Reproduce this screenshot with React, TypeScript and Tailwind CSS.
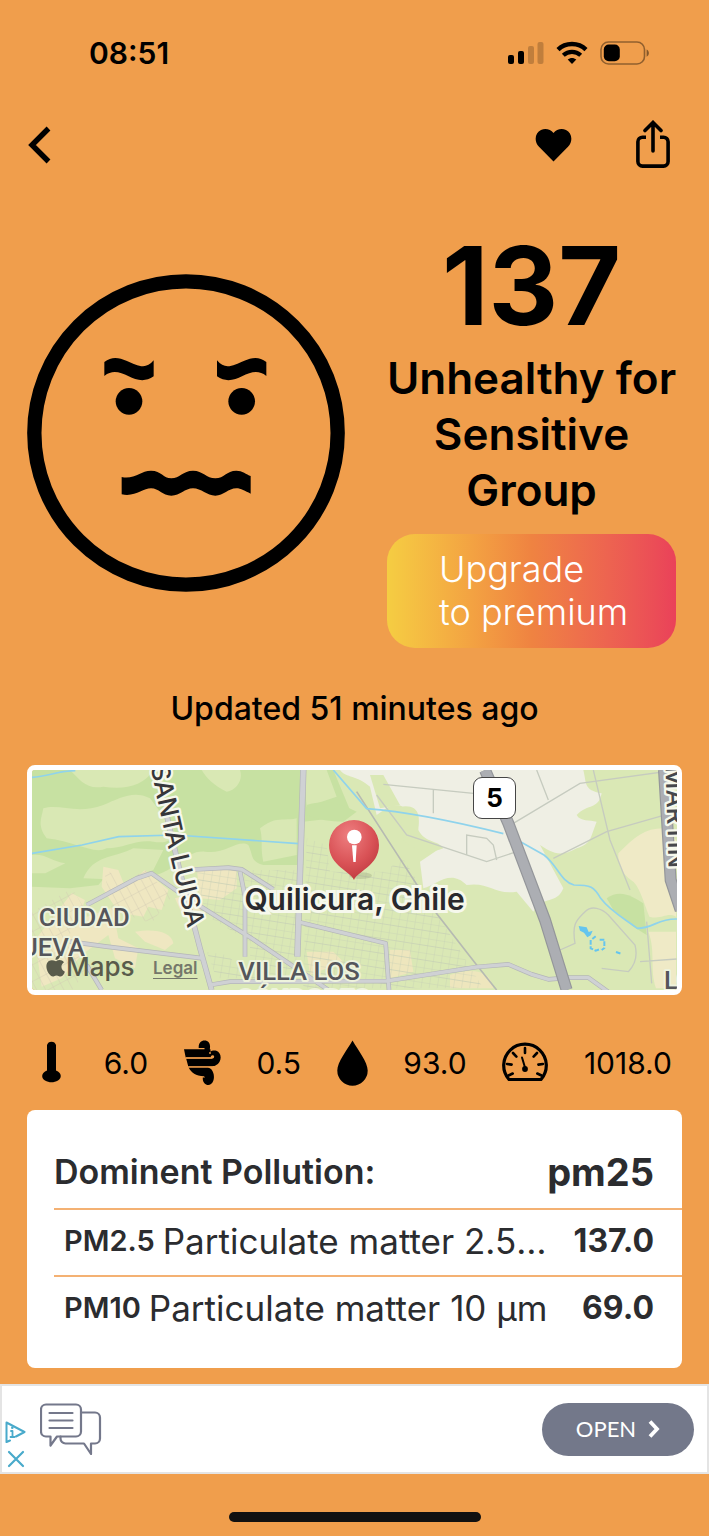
import type { ReactNode } from "react";

const BLACK = "#000";

function StatusBar() {
  return (
    <div className="flex h-[106px] items-center justify-between pr-[59px] pl-[89px]">
      <time className="text-[30px] leading-10 font-semibold">08:51</time>
      <div className="flex items-center gap-3">
        <svg width="36" height="24" viewBox="0 0 36 24" role="img" aria-label="Signal">
          <rect x="0" y="14" width="6" height="9" rx="2" />
          <rect x="10" y="10" width="6" height="13" rx="2" />
          <rect x="20" y="5" width="6" height="18" rx="2" opacity="0.2" />
          <rect x="29.500" y="1" width="6" height="22" rx="2" opacity="0.2" />
        </svg>
        <svg width="32" height="24" viewBox="0 0 32 24" fill="none" role="img" aria-label="Wi-Fi">
          <path d="M2 8.600C9.500 1.200 22.500 1.200 30 8.600" stroke={BLACK} strokeWidth="4.400" />
          <path d="M7.300 14.300c5-4.600 12.400-4.600 17.400 0" stroke={BLACK} strokeWidth="4.200" />
          <path d="M11.700 18.600c2.500-2.200 6.100-2.200 8.600 0L16 23z" fill={BLACK} />
        </svg>
        <svg width="50" height="24" viewBox="0 0 50 24" fill="none" role="img" aria-label="Battery">
          <rect x="1" y="1" width="43.500" height="22" rx="7.500" stroke={BLACK} strokeOpacity="0.4" strokeWidth="1.600" />
          <rect x="3.800" y="3.600" width="16" height="16.600" rx="5" fill={BLACK} />
          <path d="M46.600 8.500c3 1.200 3 6 0 7.200z" fill={BLACK} fillOpacity="0.45" />
        </svg>
      </div>
    </div>
  );
}

function NavBar() {
  return (
    <nav className="flex h-[78px] items-center justify-between pr-[39px] pl-7">
      <button type="button" aria-label="Back">
        <svg width="24" height="38" viewBox="0 0 24 38" fill="none">
          <path d="M20.500 2.500 4 19l16.500 16.500" stroke={BLACK} strokeWidth="5.400" />
        </svg>
      </button>
      <div className="flex items-center gap-16">
        <button type="button" aria-label="Favourite">
          <svg width="37" height="34" viewBox="0 0 37 34">
            <path d="M18.500 33.500 4 18.800C-1.500 13 .2 4.600 6 1.900c4.600-2 9.600-.6 12.500 3.200C21.400 1.300 26.400-.1 31 1.900c5.800 2.700 7.500 11.100 2 16.900z" />
          </svg>
        </button>
        <button type="button" aria-label="Share">
          <svg width="34" height="50" viewBox="0 0 34 50" fill="none" stroke={BLACK} strokeWidth="3.600">
            <path d="M10 17.200H6.500a4.600 4.600 0 0 0-4.600 4.600v19.700a4.600 4.600 0 0 0 4.600 4.600h21a4.600 4.600 0 0 0 4.600-4.600V21.800a4.600 4.600 0 0 0-4.600-4.600H24" />
            <path d="M17 31V3M9 10.500 17 2.500l8 8" strokeLinecap="round" />
          </svg>
        </button>
      </div>
    </nav>
  );
}

function Face() {
  return (
    <svg className="h-auto w-[318px] shrink-0" viewBox="22 42 954 954" role="img" aria-label="Uneasy face">
      <circle cx="499" cy="519" r="455" fill="none" stroke={BLACK} strokeWidth="43" />
      <circle cx="328" cy="424" r="40" />
      <circle cx="666" cy="424" r="40" />
      <path d="M254 306c22-18 45-13 66-4 34 15 58 29 82-1v48c-26 19-53 11-75 0-27-13-49-20-73-1z" />
      <path d="M740 306c-22-18-45-13-66-4-34 15-58 29-82-1v48c26 19 53 11 75 0 27-13 49-20 73-1z" />
      <path d="M306 651C345 659 362 632 394 632S430 655 455 655S490 632 520 632S560 655 587 655S620 632 650 632C668 632 680 643 693 648V701C676 693 664 685 650 685C626 685 612 707 587 707S545 685 520 685S482 707 455 707S418 685 394 685C370 685 346 712 306 703Z" />
    </svg>
  );
}

function Hero() {
  return (
    <section className="flex items-center gap-[42px] pr-[33px] pl-[27px]">
      <Face />
      <div className="flex min-w-0 flex-1 flex-col">
        <h1 className="-mx-3 text-center text-[44px] leading-14 font-semibold">
          <span className="block pt-1 text-[108px] leading-[128px] font-bold">137</span>
          Unhealthy for Sensitive
          <br />
          Group
        </h1>
        <button
          type="button"
          className="mt-4 rounded-[28px] bg-linear-to-r from-[#f5cd42] via-[#ef8341] to-[#ea4159] py-[14px] pl-[52px] text-left text-[36px] leading-[43px] font-light text-white"
        >
          Upgrade
          <br />
          to premium
        </button>
      </div>
    </section>
  );
}

function MapArt() {
  return (
    <svg className="block h-full w-full" viewBox="36 45 1935 660" preserveAspectRatio="xMidYMid slice" aria-hidden="true">
      <defs>
        <pattern id="blocks" width="24" height="44" patternUnits="userSpaceOnUse" patternTransform="rotate(9)">
          <path d="M0 0H24M0 22H24M0 0V44" fill="none" stroke="#c5ceb4" strokeWidth="2" />
        </pattern>
        <pattern id="lanes" width="24" height="44" patternUnits="userSpaceOnUse" patternTransform="rotate(-28)">
          <path d="M0 0H24M0 0V44" fill="none" stroke="#d0cbb2" strokeWidth="2.500" />
        </pattern>
        <radialGradient id="pin" cx="0.4" cy="0.25" r="0.8">
          <stop offset="0" stopColor="#ee7f80" />
          <stop offset="0.6" stopColor="#d95256" />
          <stop offset="1" stopColor="#bd383e" />
        </radialGradient>
      </defs>
      <rect x="36" y="45" width="1935" height="660" fill="#dae8b5" />
      <path d="M36 45H940l50 120-60 50v115H730c-40-10-30-30-45-60-30-20-70 30-130 20-60-5-90 60-150 70-60-25-130-20-170 30L150 400 36 395z" fill="#c7e1a2" />
      <g fill="#d9e8b4">
        <path d="M150 45h250c-30 50-90 60-150 50-50 10-70-20-100-50zM545 45h115c10 30-10 60-40 65-40-20-60-40-75-65zM70 160c50-15 100 20 180-10 50-20 90-45 140-20l60 80c30 30 0 60-50 50-50-8-90 20-140 20-40 20-90-20-180-30-30-40-15-60-10-90zM720 220c50-40 70-20 110-30v110l-100 20c-10-50 0-60-10-100zM190 370c30-70 90-60 150-90l90 5-30 60-80 30zM36 300c40-5 60 20 100 25l-60 30H36z" />
        <path d="M850 45h70l30 80-90 30zM850 200l90-10 60 40v110H850z" />
      </g>
      <path d="M860 150c60-20 110 0 150 20l-40 30c-40 0-70-5-110-20z" fill="#c7e1a2" />
      <g transform="translate(990 0)">
        <path d="M-30 45H700c10 40 0 60 55 70-10 50-40 30-75 65 10 20 40 15 60 20-20 50-15 65-60 80-50 30-80 10-110-10l70 130c-20 50-60 20-90 70l-50-60c-70 10-80-30-150-20-50-50-90 0-130 10l-10-80 60-40c-60-30-80-60-75-80-40-30-20-60-80-45L80 180 60 95C20 60-10 70-30 45z" fill="#efefe4" />
        <path d="M100 60H60l30 100 60-10zM150 155c60-10 60 30 55 70 20 40 60 30 75 55-50 20-80 10-120-25z" fill="#dae8b5" />
        <path d="M805 295c50-50 80-75 135-75l38 35v230c-30-15-40 10-80 0-20-50-30-95-55-110-30-20-40-50-38-80zM895 530h83v170h-60c-20-60 0-110-23-170z" fill="#efeac6" />
        <path d="M770 430c40-30 80-5 110 15l10 95-40-25-60-50z" fill="#c7e1a2" />
        <path d="M300 660c60-20 120-20 130 40H300zM120 585h60l10 65-70 20zM-130 590h80l30 30-100 40z" fill="#eee6bd" />
      </g>
      <g fill="#efe7c1">
        <path d="M250 335l45 10 20 50 60-50 70 60-20 60-40-10-15 30-90-15 15 80 60 30-10 60-60-30-20-70-80 60-60 70-60 25-20-140 110-140 40 20-20 60 110-40-40-60z" />
        <path d="M530 340h120v60l-50 35-60-5zM465 430l70-20 10 60-60 5zM345 530c60-10 110 0 115 35l-25 20-60-25z" />
      </g>
      <g>
        <path d="M530 345H830v340H690V560L540 470zM560 590l60 10 80 70H590z" fill="url(#blocks)" />
        <path d="M860 250l60 20 10 80H1090l60-40 60 100 180 290H850z" fill="url(#blocks)" />
        <path d="M250 335l60 50 65-40 80 80-60 80-120-40zM36 470l120-70 50 80-80 80 90 70-60 75H36z" fill="url(#lanes)" />
      </g>
      <g fill="none" stroke="#a9adac" strokeWidth="2.500">
        <path d="M1010 110l110 170 110 170 140 180 60 75" stroke="#b6bab2" strokeWidth="5" />
        <path d="M1090 88l150 15 120 12M1240 105v70M1070 120l90 120 240 80 90-30M1340 300v-60l60 10 20 20 10 45M1480 205l200-120 290-40M1600 310l160-80 210-60M1550 45l35 90M1720 45l50 210 60 150M1880 500l15 185M1620 585l45-20c-10-60 5-70 30-95 20-20 50-10 70 10l80 90c10 40-5 65-20 80l-80-10M1860 620l110-8" stroke="#c6cbbf" strokeWidth="4" />
      </g>
      <g fill="none" stroke="#8fd3ec" strokeWidth="5">
        <path d="M36 67c50-3 80-20 130-20M36 295l150-25 110-25 170-5 370 26" />
        <path d="M940 45l100 116c130 10 270 40 410 75M1492 255l80 45c40 30 50 80 90 90 50 0 60 5 80 40 30 40 70 60 110 90 50 0 60-30 120-28" />
      </g>
      <g fill="#65c5ee">
        <path d="M1676 513l24 4 6 14 12-4-6 14-10 6-10-14-12-6z" />
        <path d="M1712 555v25l15 7 15-5m-25-30l10-8m12 10h14v25l-8 6m43 6l18 6" fill="none" stroke="#65c5ee" strokeWidth="6" strokeDasharray="14 5" />
      </g>
      <g fill="none" stroke="#b4b6b8" strokeWidth="14" strokeLinejoin="round">
        <path d="M200 450l150-80 45-15 100 70 200 125 230 155M150 560l110 15 290 35M200 630l45 75M510 345l-15 0 130-7 40 5 95 60M660 350l15 75v180M832 500l265 65 10 140M570 690l60-10 470-2 270-42 95-8 70 30 50 15 60-5 60 0 70 50" />
        <path d="M850 45l-18 560" strokeWidth="19" />
        <path d="M440 180l40 170 60 230 35 125" strokeWidth="17" />
      </g>
      <g fill="none" stroke="#cfd1d4" strokeWidth="10" strokeLinejoin="round">
        <path d="M200 450l150-80 45-15 100 70 200 125 230 155M150 560l110 15 290 35M200 630l45 75M510 345l-15 0 130-7 40 5 95 60M660 350l15 75v180M832 500l265 65 10 140M570 690l60-10 470-2 270-42 95-8 70 30 50 15 60-5 60 0 70 50" />
        <path d="M850 45l-18 560" strokeWidth="15" />
        <path d="M440 180l40 170 60 230 35 125" strokeWidth="13" />
      </g>
      <path d="M1395 45l70 160 110 290 65 210M1932 45l20 330 30 90" fill="none" stroke="#94969a" strokeWidth="36" />
      <path d="M1395 45l70 160 110 290 65 210M1932 45l20 330 30 90" fill="none" stroke="#acaeb3" strokeWidth="29" />
      <ellipse cx="1022" cy="362" rx="34" ry="10" fill="#697556" opacity="0.2" />
      <path d="M1002 375c-8-25-75-42-75-105a75 75 0 1 1 150 0c0 63-67 80-75 105z" fill="url(#pin)" />
      <circle cx="1003" cy="246" r="22" fill="#fff" />
      <path d="M996 271h14l-3 50h-7z" fill="#fff" />
      <g fontFamily="Inter, sans-serif" stroke="#f6f8ec" strokeWidth="14" strokeLinejoin="round" paintOrder="stroke">
        <path id="santa-luisa" d="M390 20C420 190 465 360 520 590" fill="none" stroke="none" />
        <text fill="#36363a" fontSize="76" fontWeight="500">
          <textPath href="#santa-luisa" startOffset="14">SANTA LUISA</textPath>
        </text>
        <path id="martin" d="M1936 10 1948 400" fill="none" stroke="none" />
        <text fill="#46474c" fontSize="78" fontWeight="500">
          <textPath href="#martin" startOffset="22">MARTIN</textPath>
        </text>
      </g>
      <g fontFamily="Roboto, sans-serif" fill="#55565b" fontSize="77" fontWeight="500" stroke="#eef3dd" strokeWidth="12" strokeLinejoin="round" paintOrder="stroke">
        <text x="56" y="513">CIUDAD</text>
        <text x="195" y="604" textAnchor="end">NUEVA</text>
        <text x="655" y="676">VILLA LOS</text>
        <text x="650" y="758">CÓNDORES</text>
        <text x="1932" y="702">LO</text>
      </g>
    </svg>
  );
}

function LocationMap() {
  return (
    <section aria-label="Station map" className="relative mx-[27px] h-[230px] overflow-hidden rounded-lg border-[5px] border-white">
      <MapArt />
      <span className="absolute top-[7px] left-[441px] flex h-[42px] w-[43px] items-center justify-center rounded-[9px] border border-[#454545] bg-white text-[26px] leading-8 font-bold">
        5
      </span>
      <span className="absolute top-[109px] left-1/2 -translate-x-1/2 text-[30px] leading-10 font-semibold whitespace-nowrap text-[#29292d] [-webkit-text-stroke:6px_#f6f8ec] [paint-order:stroke_fill]">
        Quilicura, Chile
      </span>
      <span className="absolute bottom-[7px] left-[14px] flex items-end text-[#595b4b]">
        <svg width="20" height="22" viewBox="0 0 20 22" fill="currentColor" className="mb-[6px]" aria-hidden="true">
          <path d="M10 6.200C12.800 4.300 16 4.700 18 7.200c-4 2.800-3.100 8 .9 9.500-1.700 4.200-3.800 5.700-6 4.500-1.500-.8-3.200-.8-4.800 0C3.800 23-1.300 13.500.9 8.500 2.400 4.900 6 4.300 10 6.200zM9.500 4.800C9.400 2.300 11.300.4 14 0c.3 2.700-1.600 5-4.500 4.800z" />
        </svg>
        <span className="text-[26px] leading-8 font-medium">Maps</span>
      </span>
      <a href="#legal" className="absolute bottom-[10px] left-[121px] text-[17px] leading-6 font-semibold text-[#74776a] underline underline-offset-4">
        Legal
      </a>
    </section>
  );
}

function Stat({ label, value, children }: { label: string; value: string; children: ReactNode }) {
  return (
    <>
      <span role="img" aria-label={label}>
        {children}
      </span>
      <span>{value}</span>
    </>
  );
}

function Weather() {
  return (
    <section aria-label="Weather" className="flex h-[115px] items-center justify-between pt-5 pr-[37px] pl-[35px] text-[30px] leading-9">
      <Stat label="Temperature" value="6.0">
        <svg width="33" height="46" viewBox="0 0 33 46">
          <path d="M12 5a4.700 4.700 0 0 1 9 0v25.500c6 2.500 6 7.500 2 10-4 2.400-9 2.400-13 0-4-2.500-4-7.500 2-10z" />
        </svg>
      </Stat>
      <Stat label="Wind" value="0.5">
        <svg width="37" height="46" viewBox="0 0 37 46">
          <path d="M0 9.200h20.500V8h-5.800C14.500 3 17 .6 20.500.6c4.500 0 6.300 4 5.300 8.600 1.500 0 .5 1.300.5 2.600 1-1.300 4.500-1.500 6-1 6 2 5.800 12-.5 14.500-.8.700-2 .9-3.500.9H4.200L2.200 18.700h25.600c2.800 0 3-3 1.200-3.400-1-.3-2.300.3-2.300 2.100H1.700z" />
          <path d="M4.700 27.600c2.600 5.400 7 8.600 15.300 8.600l1 1.400h-2.200c-.5 6 4.600 9 8.200 6.500 3-2.200 3.600-7.500 2.300-11-.8-3-2.700-4.900-5.300-5.500z" />
          <path d="M1.700 17.900h26.100M4.700 27h25" stroke="#f09e4c" strokeWidth="1.100" />
          <circle cx="26" cy="13" r="0.900" fill="#f09e4c" />
        </svg>
      </Stat>
      <Stat label="Humidity" value="93.0">
        <svg width="31" height="46" viewBox="0 0 31 46">
          <path d="M15.500.5C21 10 30.700 22 30.700 30.500A15.200 15.200 0 0 1 .3 30.500C.3 22 10 10 15.500.5z" />
        </svg>
      </Stat>
      <Stat label="Pressure" value="1018.0">
        <svg width="46" height="46" viewBox="0 0 46 46" fill="none" stroke={BLACK} strokeWidth="3.200" strokeLinecap="round">
          <path d="M7 39.500A21.300 21.300 0 1 1 39 39.500z" strokeLinejoin="round" />
          <path d="M23 8v5M11 13l3.400 3.600M35 13l-3.400 3.600M5 24l4.600.6M41 24l-4.600.6M6.500 35.500l4.200-2M39.500 35.500l-4.200-2" strokeWidth="2.600" />
          <path d="M20 17.500l3 10" strokeWidth="2" />
          <circle cx="23" cy="29" r="2.900" fill={BLACK} stroke="none" />
        </svg>
      </Stat>
    </section>
  );
}

const pollutants = [
  { code: "PM2.5", name: "Particulate matter 2.5 µm", value: "137.0" },
  { code: "PM10", name: "Particulate matter 10 µm", value: "69.0" },
];

function PollutionCard() {
  return (
    <table className="mx-[27px] block rounded-lg bg-white pt-[26px] pb-[26px] pl-[27px] text-[#2b2c2f]">
      <thead className="block">
        <tr className="flex h-[72px] items-center justify-between pr-7 text-left">
          <th className="text-[34px] leading-10 font-semibold">Dominent Pollution:</th>
          <th className="text-[38px] leading-10 font-bold">pm25</th>
        </tr>
      </thead>
      <tbody className="block">
        {pollutants.map((p) => (
          <tr key={p.code} className="flex h-[67px] items-center gap-6 border-t-2 border-[#f4b173] pr-7 pb-1 pl-[10px]">
            <th className="flex min-w-0 flex-1 items-center gap-2 text-left">
              <span className="text-[29px] leading-10 font-semibold">{p.code}</span>
              <span className="truncate text-[35px] leading-12 font-normal">{p.name}</span>
            </th>
            <td className="text-[32px] leading-10 font-bold">{p.value}</td>
          </tr>
        ))}
      </tbody>
    </table>
  );
}

function AdBanner() {
  return (
    <aside aria-label="Advertisement" className="mt-4 flex h-[90px] items-center border-2 border-[#e4e4e4] bg-white pr-[13px] pl-[3px]">
      <div className="flex flex-col items-center gap-[7px] self-end pb-1 text-[#49aacb]">
        <button type="button" aria-label="Ad choices" className="block">
          <svg className="block" width="21" height="22" viewBox="0 0 21 22" fill="none" stroke="currentColor" strokeWidth="2" strokeLinejoin="round" strokeLinecap="round">
            <path d="M5 19.500 1.500 21V1.500L19.500 11 11 15.500" />
            <path d="M6 10h1.500v6M5.500 16h4" strokeWidth="1.800" />
            <circle cx="7.300" cy="6.800" r="1.300" fill="currentColor" stroke="none" />
          </svg>
        </button>
        <button type="button" aria-label="Close ad" className="block">
          <svg className="block" width="18" height="18" viewBox="0 0 18 18" stroke="currentColor" strokeWidth="2.200" strokeLinecap="round">
            <path d="M2 2l14 14M16 2 2 16" />
          </svg>
        </button>
      </div>
      <svg className="ml-[14px]" width="62" height="52" viewBox="0 0 62 52" fill="none" stroke="#74788b" strokeWidth="2.200" strokeLinejoin="round" strokeLinecap="round" aria-hidden="true">
        <path d="M6 1.500h30a5 5 0 0 1 5 5v22a5 5 0 0 1-5 5H17l-6.500 9v-9H6a5 5 0 0 1-5-5v-22a5 5 0 0 1 5-5z" />
        <path d="M41 9.500h14a5 5 0 0 1 5 5v21a5 5 0 0 1-5 5h-4V51l-7-10.500H25.500a5 5 0 0 1-5-5v-2" />
        <path d="M9.500 10h23M9.500 17.500h23M9.500 25h23" />
      </svg>
      <button type="button" className="ml-auto flex h-[53px] w-[152px] items-center justify-center gap-3 rounded-full bg-[#73788a] font-[Lato,sans-serif] text-[22px] leading-7 text-white">
        OPEN
        <svg width="12" height="18" viewBox="0 0 12 18" fill="none" stroke="currentColor" strokeWidth="3.800" aria-hidden="true">
          <path d="M2 1.500 9 9l-7 7.500" />
        </svg>
      </button>
    </aside>
  );
}

export default function App() {
  return (
    <main className="flex min-h-screen flex-col bg-[#f09e4c] font-[Inter,sans-serif] text-black">
      <StatusBar />
      <NavBar />
      <div className="pt-[34px]">
        <Hero />
      </div>
      <p className="pt-10 pb-[35px] text-center text-[32px] leading-[42px] font-medium">Updated 51 minutes ago</p>
      <LocationMap />
      <Weather />
      <PollutionCard />
      <AdBanner />
      <div className="mx-auto mt-auto mb-[14px] h-[10px] w-[252px] rounded-full bg-[#111]" />
    </main>
  );
}
